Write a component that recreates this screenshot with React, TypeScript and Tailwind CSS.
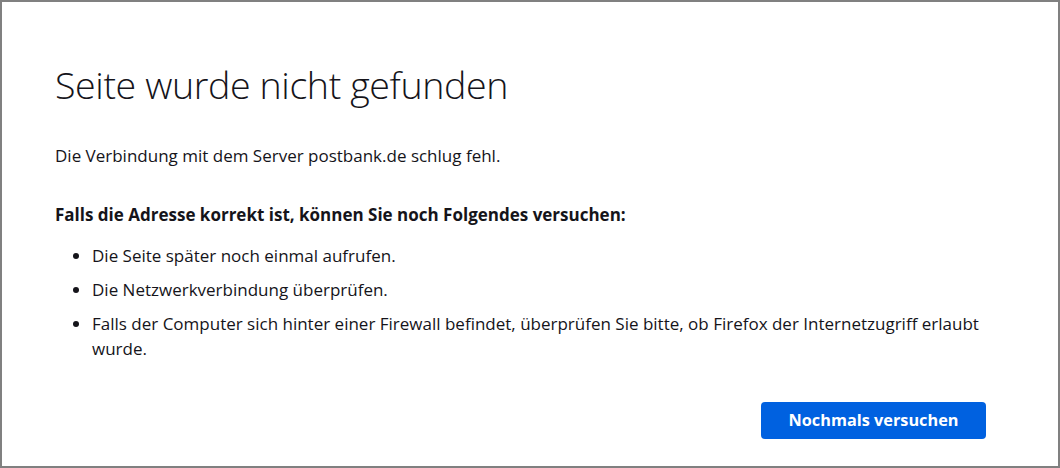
export default function App() {
  return (
    <div className="h-[468px] w-[1060px] border-2 border-[#808080] bg-white text-[#15141a] font-['Open_Sans',sans-serif]">
      <div className="ml-[53px] w-[931px] pt-[57px]">
        <h1 className="text-[37.6px] font-light leading-[52px] tracking-[-0.4px]">Seite wurde nicht gefunden</h1>
        <p className="mt-[32px] text-[17px] leading-[25px]">
          Die Verbindung mit dem Server postbank.de schlug fehl.
        </p>
        <p className="mt-[34px] text-[17px] font-bold leading-[25px]">
          Falls die Adresse korrekt ist, können Sie noch Folgendes versuchen:
        </p>
        <ul className="mt-[16px] flex flex-col gap-[9px] pl-[37px] text-[17px] leading-[25px] list-disc">
          <li>Die Seite später noch einmal aufrufen.</li>
          <li>Die Netzwerkverbindung überprüfen.</li>
          <li>
            Falls der Computer sich hinter einer Firewall befindet, überprüfen Sie bitte, ob Firefox der Internetzugriff erlaubt wurde.
          </li>
        </ul>
        <div className="mt-[41px] flex justify-end">
          <button className="h-[37px] w-[225px] rounded-[4px] bg-[#0061e0] text-[16.3px] font-bold text-white">
            Nochmals versuchen
          </button>
        </div>
      </div>
    </div>
  )
}
